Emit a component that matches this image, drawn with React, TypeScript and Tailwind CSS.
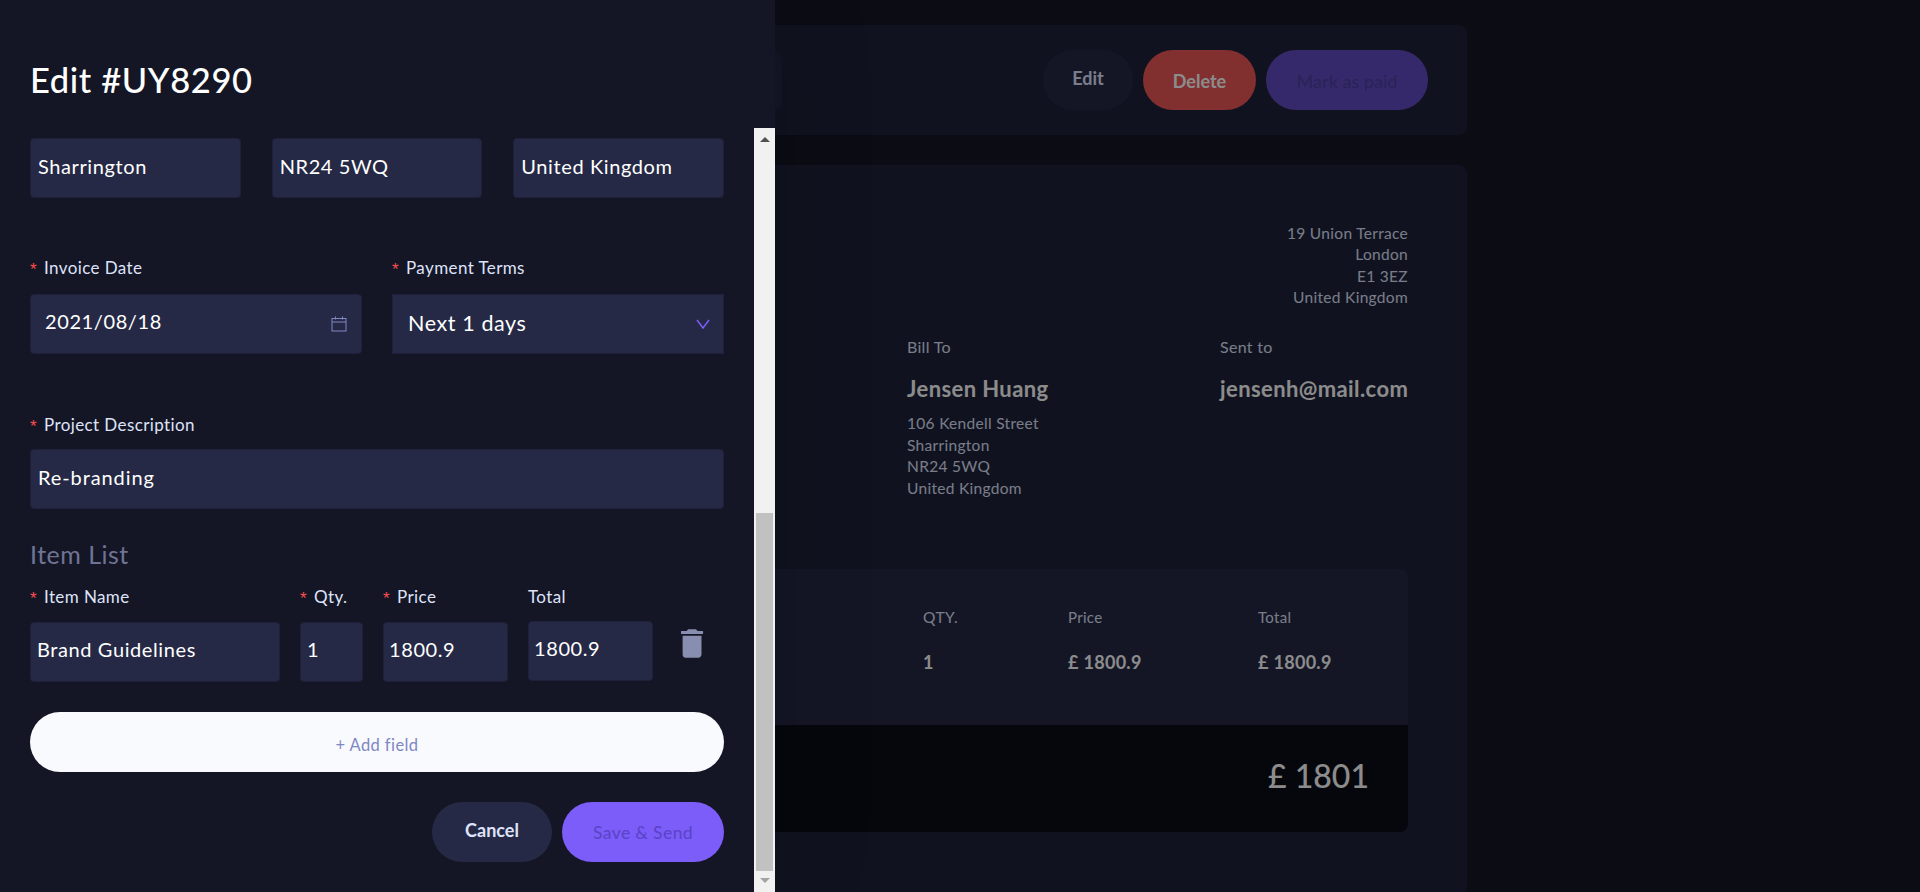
import React from "react";

const font = { fontFamily: '"Lato", "Noto Sans", sans-serif' };

function Req({ children, w = "" }: { children: React.ReactNode; w?: string }) {
  return (
    <div className={`h-[22px] flex items-center text-[17px] leading-[22px] tracking-[0.4px] text-[#DFE3FA] ${w}`}>
      <span className="text-[#ff4d4f] text-[17px] w-[14px] pt-[3px] font-['Liberation_Sans',sans-serif]">*</span>
      <span>{children}</span>
    </div>
  );
}

function Box({ children, className = "" }: { children: React.ReactNode; className?: string }) {
  return (
    <div className={`h-[60px] rounded-[4px] bg-[#252945] border border-[#1E2139] flex items-center text-white text-[20px] tracking-[0.6px] ${className}`}>
      {children}
    </div>
  );
}

function Trash() {
  return (
    <svg width="23" height="29" viewBox="0 0 13 16" className="mt-[7px] ml-[8px]">
      <path
        fill="#888EB0"
        d="M11.583 3.556v10.666c0 .982-.795 1.778-1.777 1.778H2.694a1.777 1.777 0 01-1.777-1.778V3.556h10.666zM8.473 0l.888.889h3.111v1.778H.028V.889h3.11L4.029 0h4.444z"
      />
    </svg>
  );
}

function Drawer() {
  return (
    <div className="absolute left-0 top-0 h-[892px] w-[775px] bg-[#141625] flex shadow-[10px_0_90px_rgba(0,0,0,0.12)]">
      <div className="w-[754px] pl-[30px] pr-[30px] flex flex-col">
        <div className="h-[128px] pt-[56px]">
          <h1 className="text-[34.5px] leading-[48px] font-medium tracking-[0.6px] text-white">Edit #UY8290</h1>
        </div>

        <div className="mt-[10px] grid grid-cols-3 gap-x-[31px]">
          <Box className="pl-[7px] pb-[5px]">Sharrington</Box>
          <Box className="pl-[7px] pb-[5px]">NR24 5WQ</Box>
          <Box className="pl-[7px] pb-[5px]">United Kingdom</Box>
        </div>

        <div className="mt-[59px] grid grid-cols-[332px_332px] gap-x-[30px]">
          <Req>Invoice Date</Req>
          <Req>Payment Terms</Req>
          <Box className="mt-[15px] pl-[14px] pr-[14px] pb-[7px] justify-between tracking-[-0.1px]">
            <span>2021/08/18</span>
            <svg width="16" height="16" viewBox="0 0 16 16" fill="none" stroke="#7E88C3" strokeWidth="1" className="mt-[7px]">
              <rect x="1" y="2.5" width="14" height="12.5" />
              <path d="M1 6h14M4.5 0.5v3M11.5 0.5v3" />
            </svg>
          </Box>
          <Box className="mt-[15px] pl-[15px] pr-[13px] pb-[1px] justify-between text-[21.5px] rounded-none">
            <span>Next 1 days</span>
            <svg width="14" height="10" viewBox="0 0 14 10" fill="none" stroke="#7C5DFA" strokeWidth="1.5">
              <path d="M1 1l6 8 6-8" />
            </svg>
          </Box>
        </div>

        <div className="mt-[60px]">
          <Req>Project Description</Req>
          <Box className="mt-[13px] pl-[7px] pb-[5px] tracking-[0.9px]">Re-branding</Box>
        </div>

        <h2 className="mt-[30px] h-[30px] text-[25px] leading-[30px] tracking-[0.5px] text-[#6f7496]">Item List</h2>

        <div className="mt-[17px] grid grid-cols-[250px_63px_125px_125px_auto] gap-x-[20px]">
          <Req>Item Name</Req>
          <Req>Qty.</Req>
          <Req>Price</Req>
          <div className="h-[22px] flex items-center text-[17px] tracking-[0.4px] text-[#DFE3FA]">Total</div>
          <div />
          <Box className="mt-[14px] pl-[6px] pb-[7px]">Brand Guidelines</Box>
          <Box className="mt-[14px] pl-[6px] pb-[7px]">1</Box>
          <Box className="mt-[14px] pl-[5px] pb-[7px]">1800.9</Box>
          <Box className="mt-[13px] pl-[5px] pb-[7px]">1800.9</Box>
          <div className="mt-[14px]">
            <Trash />
          </div>
        </div>

        <div className="mt-[30px] h-[60px] rounded-full bg-[#F9FAFE] flex items-center justify-center pt-[6px] text-[16.5px] tracking-[0.4px] text-[#7E88C3]">
          + Add field
        </div>

        <div className="mt-[30px] flex justify-end gap-[10px]">
          <div className="w-[120px] h-[60px] rounded-full bg-[#252945] flex items-center justify-center pb-[3px] text-[18px] font-bold text-[#DFE3FA]">
            Cancel
          </div>
          <div className="w-[162px] h-[60px] rounded-full bg-[#7C5DFA] flex items-center justify-center pt-[3px] text-[17.5px] font-medium tracking-[0.4px] text-[#5A45C8]">
            Save &amp; Send
          </div>
        </div>
      </div>

      <div className="mt-[128px] w-[21px] bg-[#F1F1F1] flex flex-col items-center">
        <svg width="10" height="5" viewBox="0 0 10 5" className="mt-[9px]"><polygon points="5,0 10,5 0,5" fill="#505050" /></svg>
        <div className="mt-[371px] h-[358px] w-[17px] bg-[#C1C1C1]" />
        <svg width="10" height="5" viewBox="0 0 10 5" className="mt-[7px]"><polygon points="0,0 10,0 5,5" fill="#A3A3A3" /></svg>
      </div>
    </div>
  );
}

function Invoice() {
  return (
    <div className="w-[1170px] ml-[297px] pt-[25px] flex flex-col gap-[30px]">
      <div className="h-[110px] rounded-[8px] bg-[#1E2139] flex items-center pl-[400px] pr-[39px] justify-between">
        <div className="w-[85px] h-[58px] rounded-[6px] bg-[#252945]" />
        <div className="flex gap-[10px]">
          <div className="w-[90px] h-[60px] rounded-full bg-[#252945] flex items-center justify-center pb-[4px] text-[18px] font-bold text-[#DFE3FA]">Edit</div>
          <div className="w-[113px] h-[60px] rounded-full bg-[#EC5757] flex items-center justify-center pt-[2px] text-[18px] font-bold text-white">Delete</div>
          <div className="w-[162px] h-[60px] rounded-full bg-[#624CC4] flex items-center justify-center pt-[2px] text-[18px] font-medium text-[#4C41A0]">Mark as paid</div>
        </div>
      </div>

      <div className="h-[730px] rounded-[8px] bg-[#1E2139] pt-[58px] px-[59px]">
        <div className="text-right text-[15.5px] leading-[21.3px] tracking-[0.3px] text-[#DFE3FA]">
          <p>19 Union Terrace</p>
          <p>London</p>
          <p>E1 3EZ</p>
          <p>United Kingdom</p>
        </div>

        <div className="mt-[27px] grid grid-cols-[551px_313px_1fr] text-[#DFE3FA]">
          <div />
          <div>
            <p className="text-[16px] leading-[24px] tracking-[0.3px]">Bill To</p>
            <p className="mt-[18px] text-[22px] leading-[24px] font-bold tracking-[0.4px] text-white">Jensen Huang</p>
            <div className="mt-[12px] text-[15.5px] leading-[21.5px] tracking-[0.3px]">
              <p>106 Kendell Street</p>
              <p>Sharrington</p>
              <p>NR24 5WQ</p>
              <p>United Kingdom</p>
            </div>
          </div>
          <div>
            <p className="text-[16px] leading-[24px] tracking-[0.3px]">Sent to</p>
            <p className="mt-[18px] text-[22px] leading-[24px] font-bold tracking-[0.4px] text-white whitespace-nowrap">jensenh@mail.com</p>
          </div>
        </div>

        <div className="mt-[70px] rounded-[8px] overflow-hidden">
          <div className="h-[156px] bg-[#252945] pt-[36px] grid grid-cols-[567px_145px_190px_1fr] content-start">
            <div className="pl-[265px] text-[15px] leading-[24px] text-[#DFE3FA]">Item Name</div>
            <div className="text-[15.5px] leading-[24px] tracking-[0.5px] text-[#DFE3FA]">QTY.</div>
            <div className="text-[15px] leading-[24px] tracking-[0.3px] text-[#DFE3FA]">Price</div>
            <div className="text-[15px] leading-[24px] tracking-[0.3px] text-[#DFE3FA]">Total</div>
            <div className="mt-[21px] pl-[265px] text-[18px] leading-[24px] font-bold text-white">Brand Guidelines</div>
            <div className="mt-[21px] text-[18px] leading-[24px] font-bold text-white">1</div>
            <div className="mt-[21px] text-[18px] leading-[24px] font-bold tracking-[0.3px] text-white">£ 1800.9</div>
            <div className="mt-[21px] text-[18px] leading-[24px] font-bold tracking-[0.3px] text-white">£ 1800.9</div>
          </div>
          <div className="h-[107px] bg-[#0C0E16] flex items-center justify-end pr-[39px] pb-[6px] text-[32px] font-medium text-white">
            £ 1801
          </div>
        </div>
      </div>
    </div>
  );
}

export default function App() {
  return (
    <div style={font} className="relative h-[892px] w-[1920px] overflow-hidden bg-[#141625]">
      <Invoice />
      <div className="absolute inset-0 bg-black/45" />
      <Drawer />
    </div>
  );
}
